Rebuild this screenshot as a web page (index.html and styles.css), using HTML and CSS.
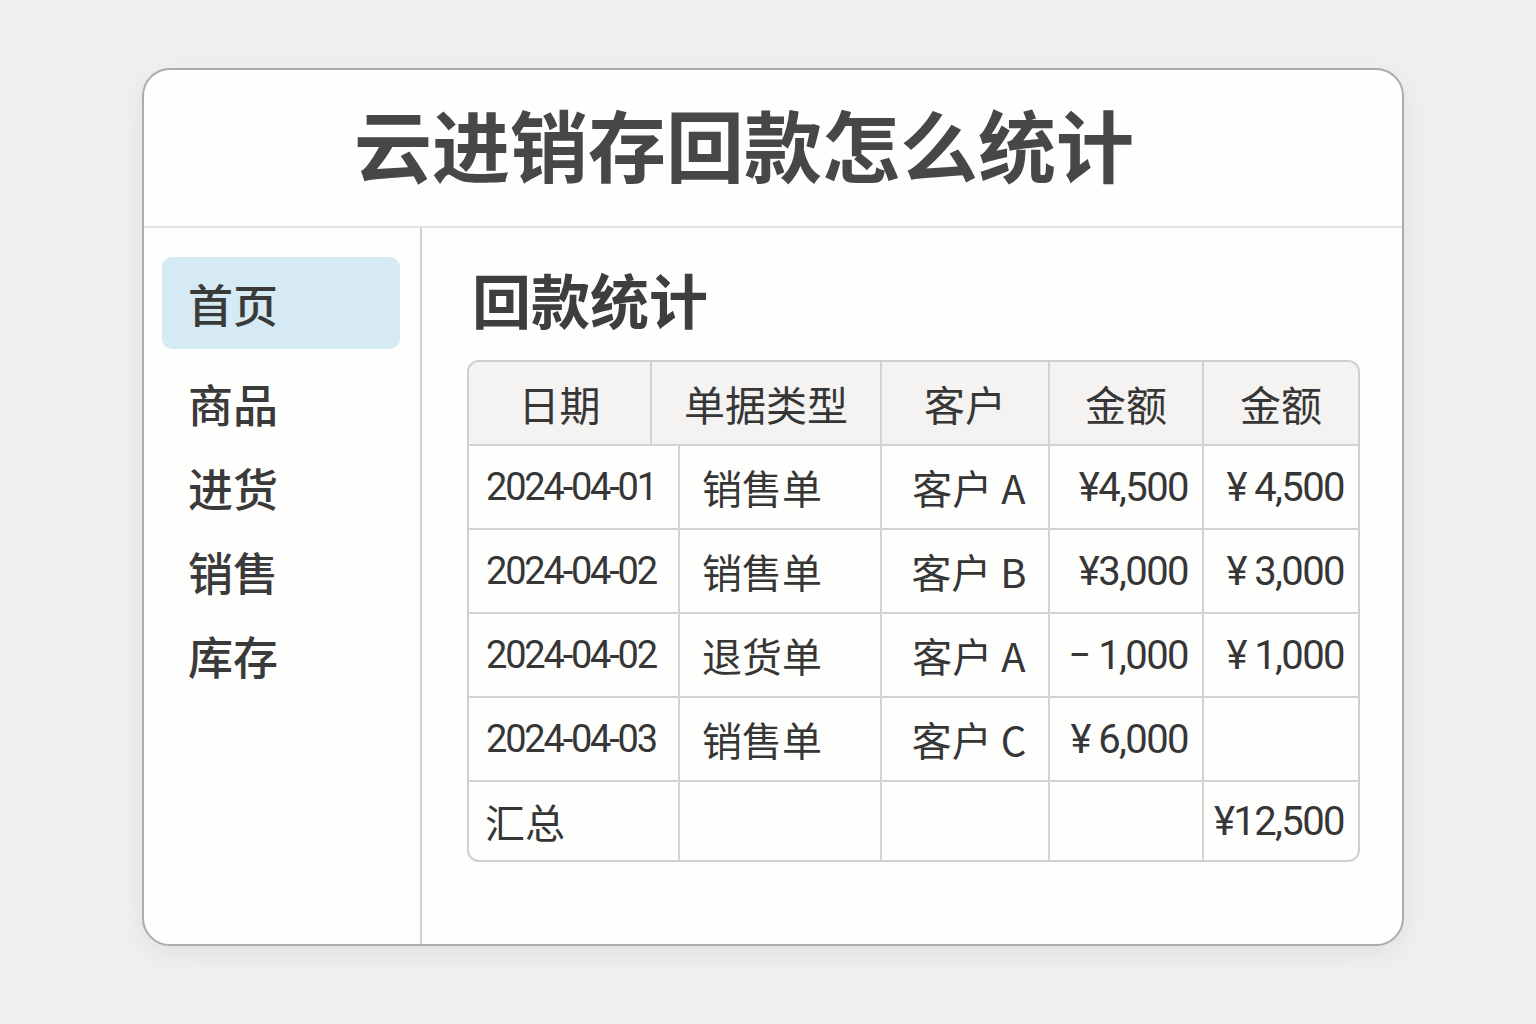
FILE: index.html
```html
<!DOCTYPE html>
<html lang="zh-CN">
  <head>
    <meta charset="UTF-8" />
    <meta name="viewport" content="width=device-width, initial-scale=1.0" />
    <title>云进销存回款怎么统计</title>

    <link rel="stylesheet" href="styles.css">
  </head>
  <body>
    <div class="app-card">
      <div class="app-header">
        <h1>云进销存回款怎么统计</h1>
      </div>
      <div class="app-body">
        <div class="sidebar">
          <div class="menu-item active">首页</div>
          <div class="menu-item">商品</div>
          <div class="menu-item">进货</div>
          <div class="menu-item">销售</div>
          <div class="menu-item">库存</div>
        </div>
        <div class="main">
          <h2>回款统计</h2>
          <div class="stats-table">
            <div class="row head-row">
              <div class="cell">日期</div>
              <div class="cell">单据类型</div>
              <div class="cell">客户</div>
              <div class="cell">金额</div>
              <div class="cell">金额</div>
            </div>
            <div class="row">
              <div class="cell date">2024-04-01</div>
              <div class="cell type">销售单</div>
              <div class="cell customer">客户 A</div>
              <div class="cell money">¥4,500</div>
              <div class="cell money">¥ 4,500</div>
            </div>
            <div class="row">
              <div class="cell date">2024-04-02</div>
              <div class="cell type">销售单</div>
              <div class="cell customer">客户 B</div>
              <div class="cell money">¥3,000</div>
              <div class="cell money">¥ 3,000</div>
            </div>
            <div class="row">
              <div class="cell date">2024-04-02</div>
              <div class="cell type">退货单</div>
              <div class="cell customer">客户 A</div>
              <div class="cell money">− 1,000</div>
              <div class="cell money">¥ 1,000</div>
            </div>
            <div class="row">
              <div class="cell date">2024-04-03</div>
              <div class="cell type">销售单</div>
              <div class="cell customer">客户 C</div>
              <div class="cell money">¥ 6,000</div>
              <div class="cell money"></div>
            </div>
            <div class="row total-row">
              <div class="cell type-total">汇总</div>
              <div class="cell"></div>
              <div class="cell"></div>
              <div class="cell"></div>
              <div class="cell money">¥12,500</div>
            </div>
          </div>
        </div>
      </div>
    </div>
  </body>
</html>
```

FILE: styles.css
```css
body {
  margin: 0;
  background-color: #f1f0ee;
  font-family: "Noto Sans CJK SC", "Noto Sans", sans-serif;
  color: #363636;
  padding: 68px 0 0 142px;
  height: 1024px;
  box-sizing: border-box;
}

.app-card {
  width: 1262px;
  height: 878px;
  box-sizing: border-box;
  background-color: #fefefd;
  border: 2px solid #acacac;
  border-radius: 28px;
  box-shadow: 0 8px 30px rgba(0, 0, 0, 0.07);
  display: flex;
  flex-direction: column;
  overflow: hidden;
}

.app-header {
  height: 156px;
  flex-shrink: 0;
  border-bottom: 2px solid #e4e4e2;
  display: flex;
  align-items: center;
  justify-content: center;
}

.app-header h1 {
  margin: 0 58px 10px 0;
  font-size: 78px;
  font-weight: 700;
  color: #474747;
  line-height: 1;
}

.app-body {
  flex: 1;
  display: flex;
}

.sidebar {
  width: 278px;
  flex-shrink: 0;
  box-sizing: border-box;
  border-right: 2px solid #cfcfcf;
  padding: 29px 18px 0 18px;
}

.menu-item {
  height: 84px;
  display: flex;
  align-items: center;
  padding-left: 26px;
  font-size: 45px;
  font-weight: 500;
  color: #3a3a3a;
}

.menu-item.active {
  height: 92px;
  margin: 0 2px 12px 0;
  background-color: #d5eaf3;
  border-radius: 10px;
}

.main {
  flex: 1;
  padding: 35px 42px 0 45px;
}

.main h2 {
  margin: 0 0 25px 5px;
  font-size: 59px;
  font-weight: 700;
  line-height: 72px;
  color: #3e3e3e;
}

.stats-table {
  width: 893px;
  box-sizing: border-box;
  border: 2px solid #cfcfcf;
  border-radius: 12px;
  overflow: hidden;
}

.row {
  display: grid;
  grid-template-columns: 211px 202px 168px 154px 1fr;
  height: 84px;
  border-bottom: 2px solid #d3d3d3;
  box-sizing: border-box;
}

.head-row {
  grid-template-columns: 183px 230px 168px 154px 1fr;
  background-color: #f4f3f1;
}

.total-row {
  height: 78px;
  border-bottom: none;
}

.cell {
  display: flex;
  align-items: center;
  border-right: 2px solid #d3d3d3;
  font-size: 40px;
  color: #363636;
}

.cell:last-child {
  border-right: none;
}

.head-row .cell {
  justify-content: center;
  font-size: 41px;
}

.date {
  font-family: Roboto, "Noto Sans CJK SC", sans-serif;
  font-size: 38px;
  letter-spacing: -2.2px;
  padding-left: 17px;
}

.type {
  padding-left: 22px;
}

.type-total {
  padding-left: 16px;
}

.customer {
  justify-content: center;
  padding-left: 8px;
}

.money {
  justify-content: flex-end;
  padding-right: 14px;
  font-family: Roboto, "Noto Sans CJK SC", sans-serif;
  font-size: 40px;
  letter-spacing: -1.6px;
}
```
